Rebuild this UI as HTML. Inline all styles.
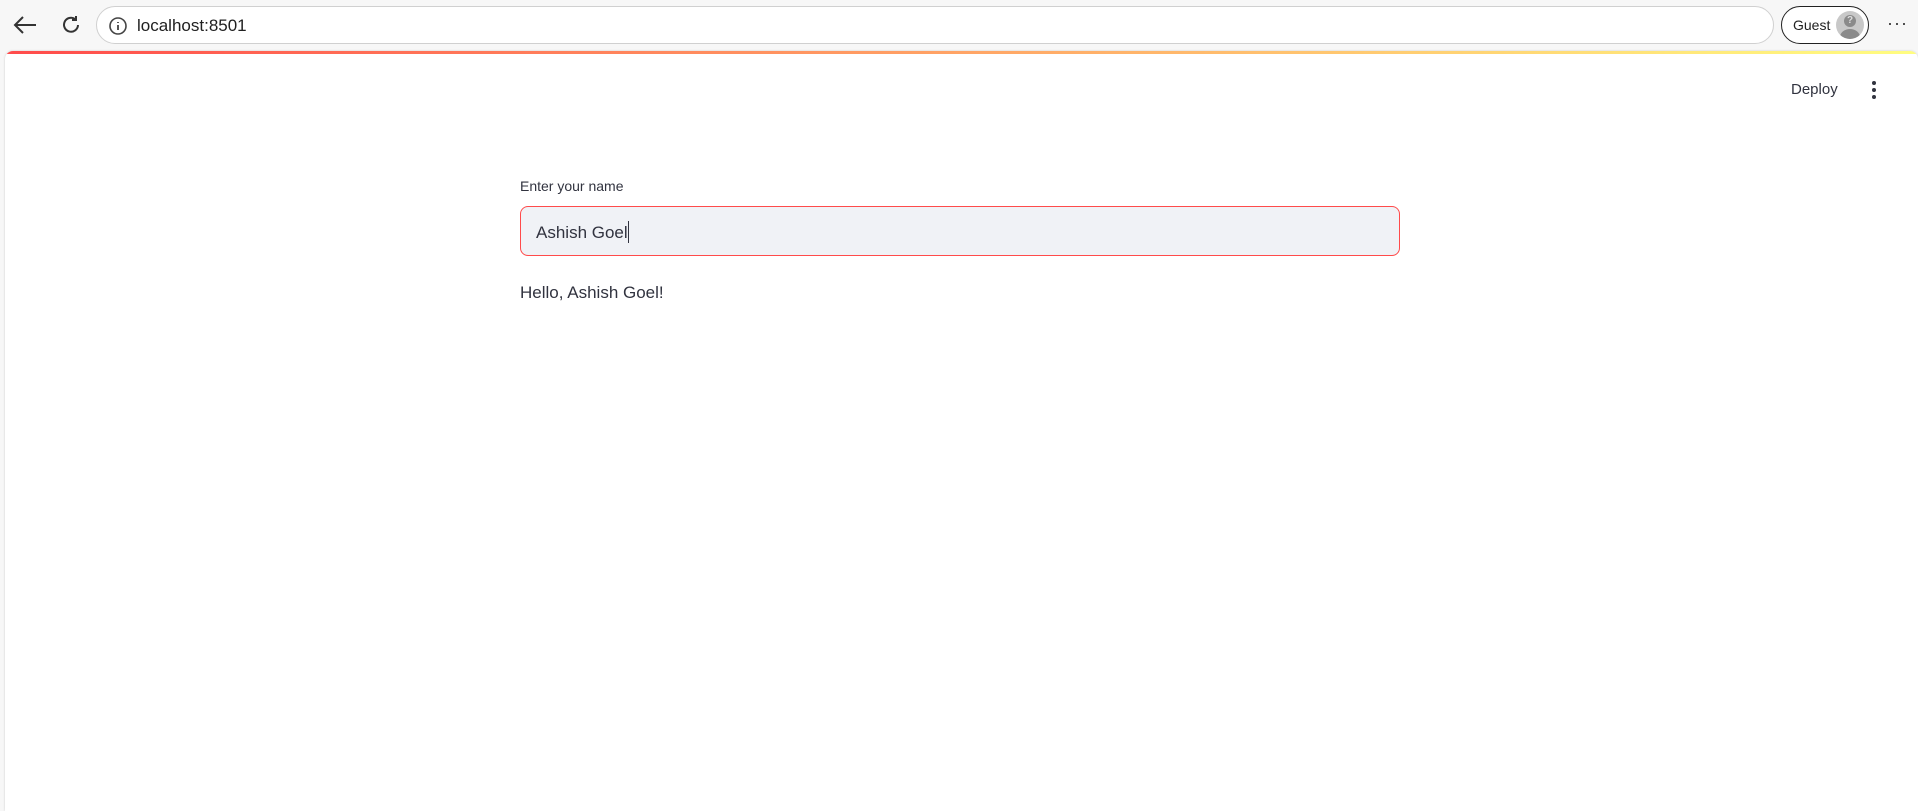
<!DOCTYPE html>
<html><head><style>
body{margin:0;width:1918px;height:808px;background:#f7f7f7;font-family:"Liberation Sans",sans-serif;overflow:hidden;position:relative}
.addr{position:absolute;left:96px;top:6px;width:1678px;height:38px;border:1px solid #d0d0d0;border-radius:20px;background:#fff;box-sizing:border-box}
.addr span{position:absolute;left:40px;top:9px;font-size:17px;color:#202020}
.guest{position:absolute;left:1781px;top:6px;width:88px;height:38px;border:1.5px solid #222;border-radius:20px;box-sizing:border-box;background:#fff}
.guest span{position:absolute;left:11px;top:10px;font-size:14px;color:#222}
.av{position:absolute;right:4px;top:4px;width:28px;height:28px;border-radius:50%;background:#c8c8c8;overflow:hidden}
.panel{position:absolute;left:5px;top:51px;width:1913px;height:760px;background:#fff;border-radius:8px 8px 0 0;overflow:hidden;box-shadow:0 0 2px #ccc}
.bar{height:3px;background:linear-gradient(90deg,#ff4b4b,#fffd80)}
.lab{position:absolute;left:520px;top:178px;font-size:14px;color:#31333f}
.inp{position:absolute;left:520px;top:206px;width:880px;height:50px;border:1px solid #ff4b4b;border-radius:8px;background:#f0f2f6;box-sizing:border-box}
.inp span{position:absolute;left:15px;top:14px;font-size:17px;color:#31333f}
.hello{position:absolute;left:520px;top:283px;font-size:17px;color:#31333f}
</style></head><body>
<svg style="position:absolute;left:12px;top:14px" width="26" height="22"><path d="M24 11H3M11 3L3 11L11 19" stroke="#333" stroke-width="2" fill="none"/></svg>
<svg style="position:absolute;left:60px;top:14px" width="22" height="22"><path d="M18 11A7 7 0 1 1 15 5M16 2V6H12" stroke="#333" stroke-width="2" fill="none"/></svg>
<div class="addr"><svg style="position:absolute;left:11px;top:9px" width="20" height="20"><circle cx="10" cy="10" r="8" stroke="#444" stroke-width="1.6" fill="none"/><path d="M10 9V14M10 6V7" stroke="#444" stroke-width="1.8"/></svg><span>localhost:8501</span></div>
<div class="guest"><span>Guest</span><div class="av"><div style="position:absolute;left:4px;top:18px;width:20px;height:16px;border-radius:50%;background:#8a8a8a"></div><div style="position:absolute;left:8px;top:4px;width:12px;height:12px;border-radius:50%;background:#8a8a8a;color:#ddd;font-size:10px;text-align:center;line-height:12px;font-weight:bold">?</div></div></div>
<div style="position:absolute;left:1887px;top:13px;font-size:18px;color:#333;letter-spacing:1px">···</div>
<div class="panel"><div class="bar"></div>
<div style="position:absolute;left:1786px;top:30px;font-size:15px;color:#31333f">Deploy</div>
<svg style="position:absolute;left:1865px;top:29px" width="8" height="20"><circle cx="4" cy="3" r="2" fill="#31333f"/><circle cx="4" cy="10" r="2" fill="#31333f"/><circle cx="4" cy="17" r="2" fill="#31333f"/></svg>
</div>
<div class="lab">Enter your name</div>
<div class="inp"><span>Ashish Goel<span style="position:static;display:inline-block;width:1px;height:22px;background:#31333f;vertical-align:-5px"></span></span></div>
<div class="hello">Hello, Ashish Goel!</div>
</body></html>
